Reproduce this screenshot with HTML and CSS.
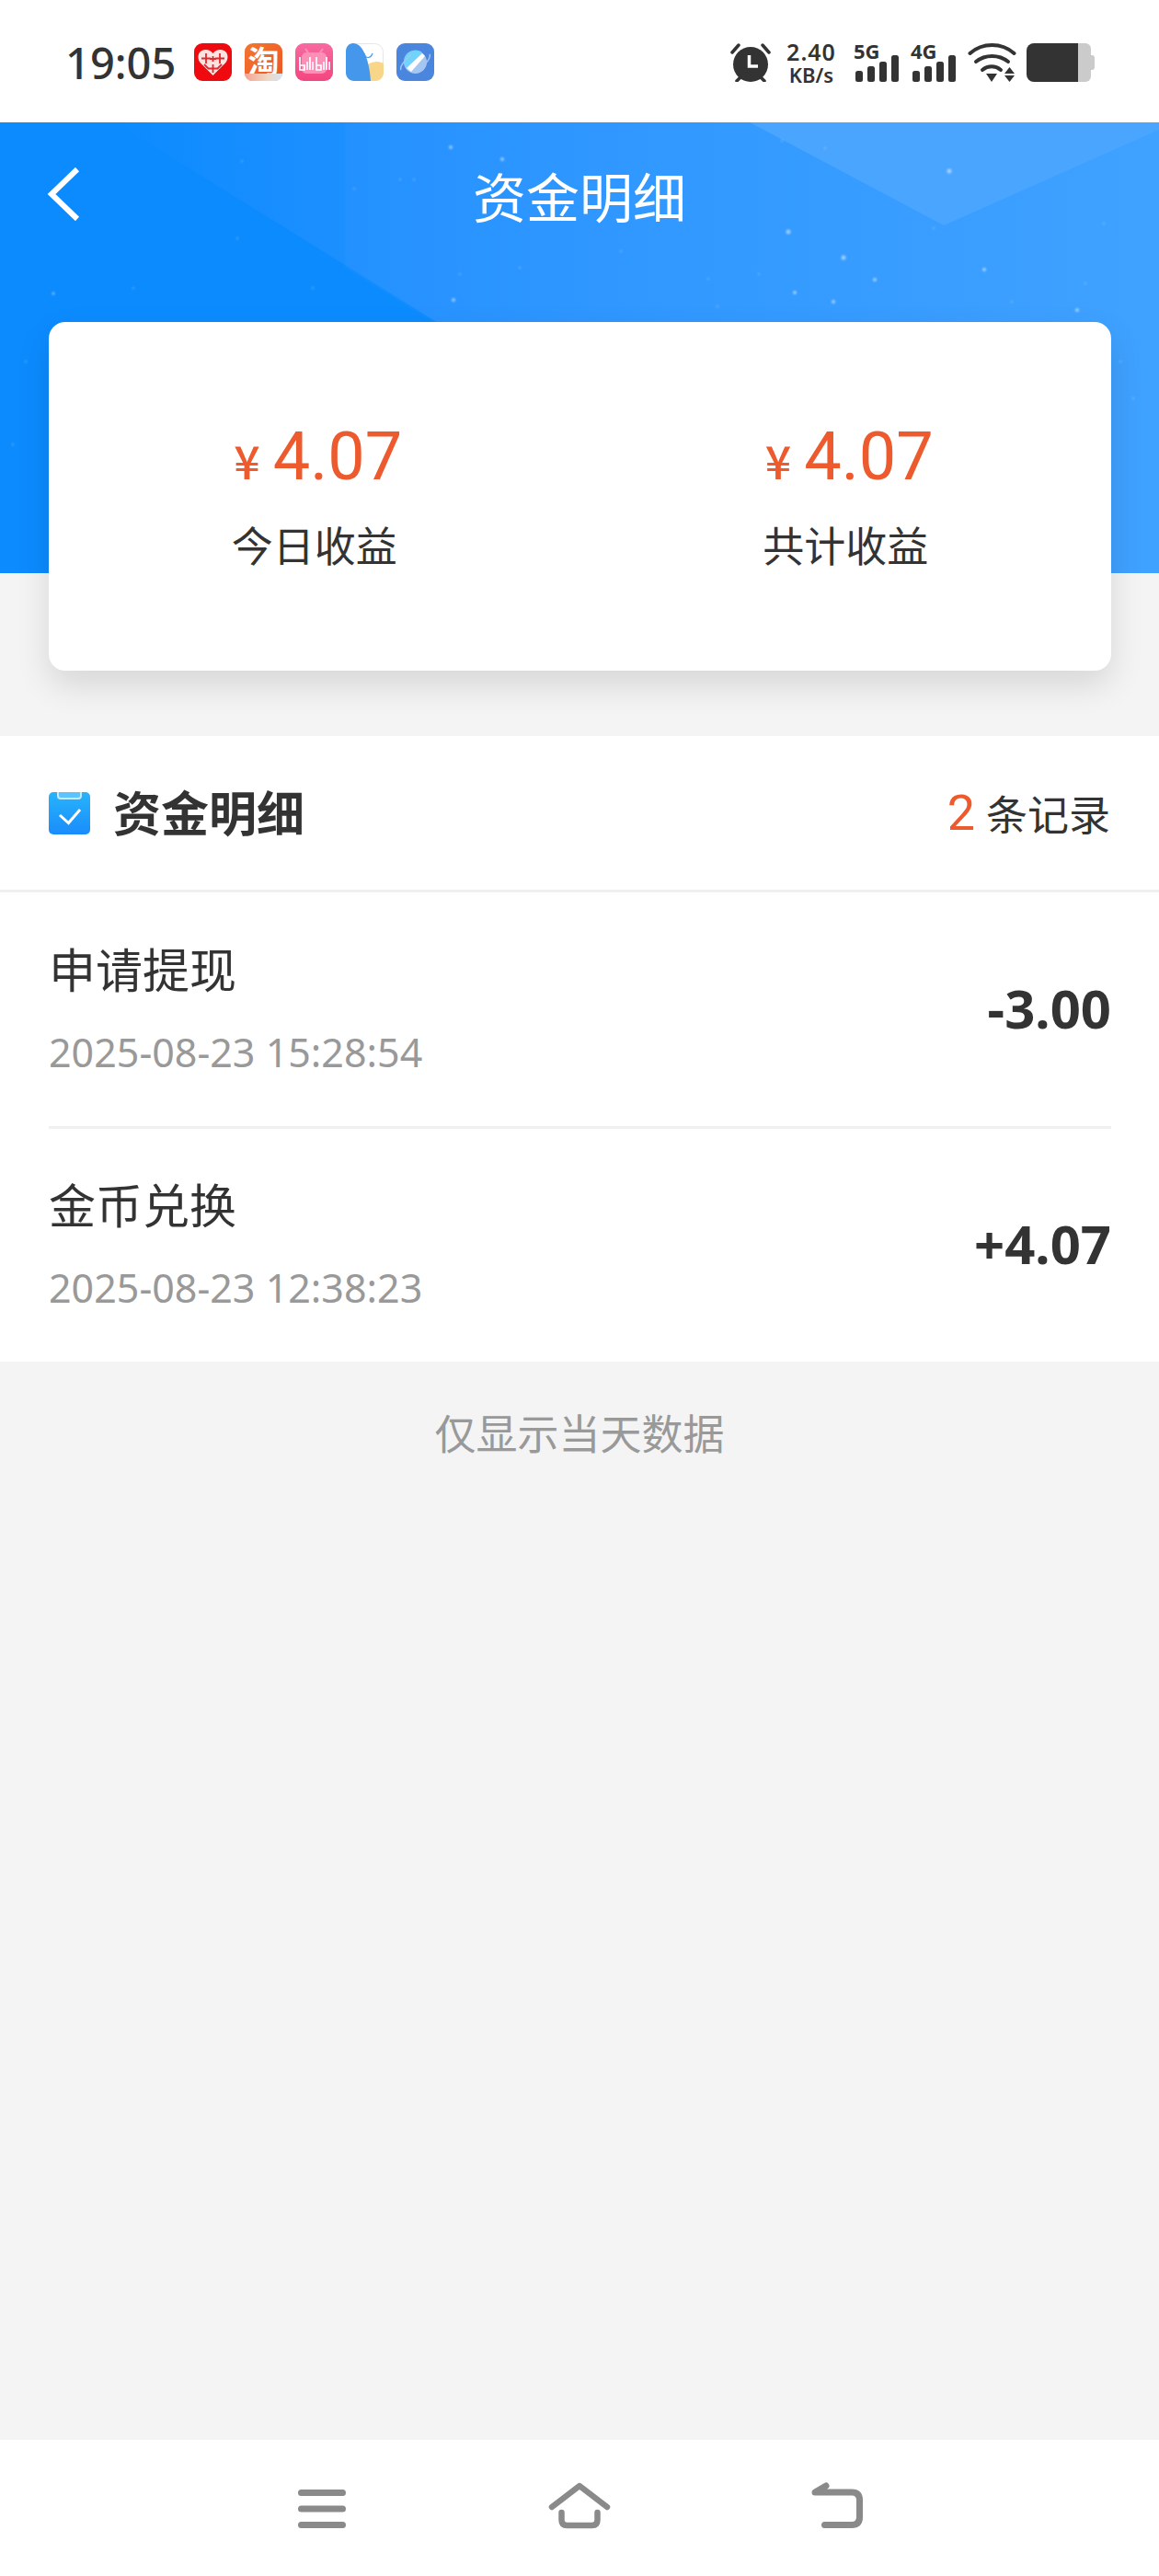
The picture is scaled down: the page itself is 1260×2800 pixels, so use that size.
FILE: index.html
```html
<!DOCTYPE html>
<html lang="zh-CN">
<head>
    <meta charset="UTF-8">
    <meta name="viewport" content="width=device-width, initial-scale=1.0">
    <title>资金明细</title>
    <link rel="stylesheet" href="styles.css">
</head>
<body>

<div class="page">
    <!-- 状态栏 -->
    <div class="status-bar">
        <span class="clock">19:05</span>
        <div class="app-icons">
            <svg class="app-icon" viewBox="0 0 41 41"><rect width="41" height="41" rx="9" fill="#ee0a0f"/><path d="M20.500 35 7 21.500C3 17 4 10 8.500 8c4-2 9-1 12 3 3-4 8-5 12-3 4.500 2 5.500 9 1.500 13.500z" fill="#fbe3e1"/><path d="M13 11v11M8 16.500h10M28 11v11M23 16.500h10M20.500 14v6M17 17h7M20.500 23v9M16 27.500h9M11 23l5 5M30 23l-5 5" stroke="#e2282d" stroke-width="1.800"/></svg>
            <div class="app-icon taobao">淘</div>
            <svg class="app-icon" viewBox="0 0 41 41"><defs><linearGradient id="bili-grad" x1="0" y1="0" x2="0" y2="1"><stop offset="0" stop-color="#f76aa0"/><stop offset="1" stop-color="#f4457f"/></linearGradient></defs><rect width="41" height="41" rx="9" fill="url(#bili-grad)"/><rect x="7" y="10" width="27" height="23" rx="5" fill="#fb8fb5"/><path d="M14 10l-3-4M27 10l3-4" stroke="#fb8fb5" stroke-width="2"/><path d="M5 15v14h5v-5H5M13 20v9M16 15v14M19 20v9M23 15v14h5v-5h-5M31 20v9M34 15v14M37 20v9" fill="none" stroke="#fff" stroke-width="1.700"/></svg>
            <svg class="app-icon" viewBox="0 0 41 41"><rect x=".5" y=".5" width="40" height="40" rx="9" fill="#fff" stroke="#e6e6e6"/><path d="M41 22v10c0 5-4 9-9 9H20V26c6-6 15-8 21-4z" fill="#f7d68a"/><path d="M0 9c0-5 3-9 8-9 9 0 17 14 19 41H9c-5 0-9-4-9-9z" fill="#4497ea"/><path d="M20 11c1 6 7 6 9 0" fill="none" stroke="#4497ea" stroke-width="1.200"/></svg>
            <svg class="app-icon" viewBox="0 0 41 41"><rect width="41" height="41" rx="9" fill="#4a85de"/><circle cx="20.500" cy="20.500" r="12.500" fill="#a6c6f2"/><path d="M9 15a12.500 12.500 0 0 1 19-5L12 28a12.500 12.500 0 0 1-3-13z" fill="#6fd3fb"/><path d="M11 27 28 11l3 3-15 17z" fill="#fff"/><path d="M5 29c-2-3 4-11 11-17M36 12c2 3-4 11-11 17" fill="none" stroke="#a6c6f2" stroke-width="1.500"/></svg>
        </div>
        <div class="status-right">
            <svg class="alarm" viewBox="0 0 44 42"><circle cx="22" cy="23" r="19" fill="#333"/><path d="M2 10 9 2M42 10 35 2M7 41l4-4M37 41l-4-4" stroke="#333" stroke-width="3.500" stroke-linecap="round"/><path d="M20.500 13v12H30" fill="none" stroke="#fff" stroke-width="3.500"/></svg>
            <div class="net-speed">
                <span class="speed-num">2.40</span>
                <span class="speed-unit">KB/s</span>
            </div>
            <div class="signal">
                <span class="signal-label">5G</span>
                <svg class="signal-bars" viewBox="0 0 50 42"><rect x="2" y="30" width="8" height="12" rx="2.500"/><rect x="15" y="25" width="8" height="17" rx="2.500"/><rect x="28" y="20" width="8" height="22" rx="2.500"/><rect x="41" y="13" width="8" height="29" rx="2.500"/></svg>
            </div>
            <div class="signal signal-second">
                <span class="signal-label">4G</span>
                <svg class="signal-bars" viewBox="0 0 50 42"><rect x="2" y="30" width="8" height="12" rx="2.500"/><rect x="15" y="25" width="8" height="17" rx="2.500"/><rect x="28" y="20" width="8" height="22" rx="2.500"/><rect x="41" y="13" width="8" height="29" rx="2.500"/></svg>
            </div>
            <svg class="wifi" viewBox="0 0 53 42"><g fill="none" stroke="#333" stroke-width="4" stroke-linecap="round"><path d="M2.500 11C16-1 37-1 50.500 11"/><path d="M9 20c10-8 25-8 35 0"/><path d="M16 29c6-5 14-5 20 0"/></g><path d="M20 33h12l-6 9z" fill="#333"/><path d="M45.500 26l5.500 7H40zM40 35h11l-5.500 7z" fill="#333"/></svg>
            <div class="battery">
                <div class="battery-level"></div>
                <div class="battery-rest"></div>
                <div class="battery-tip"></div>
            </div>
        </div>
    </div>

    <!-- 蓝色头部 -->
    <div class="header">
        <svg class="header-bg" viewBox="0 0 1260 490" preserveAspectRatio="none">
            <defs>
                <linearGradient id="fade-grad" x1="0" y1="0" x2="1" y2="0"><stop offset="0" stop-color="#0c8bff"/><stop offset=".3" stop-color="#2391ff"/><stop offset=".5" stop-color="#2c96ff"/><stop offset="1" stop-color="#3ca0ff"/></linearGradient>
                <filter id="soft"><feGaussianBlur stdDeviation=".8"/></filter>
            </defs>
            <polygon points="126,0 1260,0 1260,490 913,490" fill="url(#fade-grad)"/>
            <polygon points="375,0 1260,0 1260,490 913,490 375,158" fill="#fff" opacity=".025"/>
            <polygon points="815,0 1260,0 1260,8 1026,112" fill="#4aa5ff"/>
            <g fill="#fff" opacity=".5" filter="url(#soft)">
                <circle cx="1032" cy="53" r="2.500"/><circle cx="857" cy="119" r="2.500"/><circle cx="917" cy="147" r="2.500"/><circle cx="1070" cy="160" r="2"/><circle cx="906" cy="195" r="2"/><circle cx="1171" cy="204" r="2"/><circle cx="951" cy="171" r="2"/><circle cx="864" cy="185" r="2"/><circle cx="490" cy="27" r="2"/><circle cx="546" cy="40" r="2"/><circle cx="58" cy="186" r="1.500"/><circle cx="493" cy="193" r="2"/>
            </g>
            <g fill="#fff" opacity=".18" filter="url(#soft)">
                <circle cx="435" cy="62" r="1.500"/><circle cx="450" cy="62" r="1.500"/><circle cx="385" cy="72" r="1.500"/><circle cx="263" cy="42" r="1.500"/><circle cx="500" cy="165" r="1.500"/><circle cx="565" cy="158" r="1.500"/><circle cx="340" cy="180" r="1.500"/><circle cx="145" cy="180" r="1.500"/><circle cx="258" cy="126" r="1.500"/><circle cx="740" cy="70" r="1.500"/><circle cx="850" cy="20" r="1.500"/><circle cx="897" cy="28" r="1.500"/><circle cx="1015" cy="115" r="1.500"/><circle cx="1180" cy="175" r="1.500"/><circle cx="1100" cy="195" r="1.500"/><circle cx="1200" cy="110" r="1.500"/><circle cx="780" cy="200" r="1.500"/><circle cx="675" cy="140" r="1.500"/><circle cx="770" cy="170" r="1.500"/><circle cx="825" cy="165" r="1.500"/><circle cx="1232" cy="300" r="1.500"/><circle cx="1218" cy="260" r="1.500"/><circle cx="28" cy="260" r="1.500"/><circle cx="14" cy="350" r="1.500"/>
            </g>
        </svg>
        <div class="header-bar">
            <svg class="back" viewBox="0 0 36 58"><path d="M33 2 5 29l28 27" fill="none" stroke="#fff" stroke-width="6"/></svg>
            <h1 class="header-title">资金明细</h1>
        </div>
    </div>

    <!-- 收益卡片 -->
    <div class="summary-card">
        <div class="summary-item">
            <div class="amount"><span class="yen">¥</span>4.07</div>
            <div class="amount-label">今日收益</div>
        </div>
        <div class="summary-item">
            <div class="amount"><span class="yen">¥</span>4.07</div>
            <div class="amount-label">共计收益</div>
        </div>
    </div>

    <!-- 明细列表 -->
    <div class="detail">
        <div class="detail-head">
            <div class="detail-title">
                <svg class="detail-icon" viewBox="0 0 45 46">
                    <defs><linearGradient id="clip-grad" x1="0" y1="0" x2="0" y2="1"><stop offset="0" stop-color="#27b4fb"/><stop offset="1" stop-color="#1a8cfb"/></linearGradient></defs>
                    <rect width="45" height="46" rx="5" fill="url(#clip-grad)"/>
                    <path d="M10 0v4c0 2 1 3 3 3h19c2 0 3-1 3-3V0" fill="#5cc4fc" stroke="#c6ebfe" stroke-width="2"/>
                    <path d="M12 25l9.500 8.500L34 19" fill="none" stroke="#fff" stroke-width="3"/>
                </svg>
                <span class="detail-name">资金明细</span>
            </div>
            <div class="detail-count"><span class="count-num">2</span>条记录</div>
        </div>
        <div class="record">
            <div class="record-info">
                <div class="record-name">申请提现</div>
                <div class="record-time">2025-08-23 15:28:54</div>
            </div>
            <div class="record-money">-3.00</div>
        </div>
        <div class="record">
            <div class="record-info">
                <div class="record-name">金币兑换</div>
                <div class="record-time">2025-08-23 12:38:23</div>
            </div>
            <div class="record-money">+4.07</div>
        </div>
    </div>

    <div class="tip">仅显示当天数据</div>

    <!-- 底部导航 -->
    <div class="nav-bar">
        <svg class="nav-icon" viewBox="0 0 70 60"><path d="M12.500 13.500h45M12.500 31h45M12.500 48.500h45" fill="none" stroke="#8a8a8a" stroke-width="7" stroke-linecap="round"/></svg>
        <svg class="nav-icon" viewBox="0 0 70 60"><path d="M5 29 35 6l30 23M15.500 35v8q0 6 6 6h27q6 0 6-6v-8" fill="none" stroke="#8a8a8a" stroke-width="6.500" stroke-linecap="round" stroke-linejoin="round"/></svg>
        <svg class="nav-icon" viewBox="0 0 70 60"><path d="M21.500 48.500H51q8.500 0 8.500-8.500V21.500q0-8.500-8.500-8.500H11L23 6" fill="none" stroke="#8a8a8a" stroke-width="7" stroke-linecap="round" stroke-linejoin="round"/></svg>
    </div>
</div>

</body>
</html>
```

FILE: styles.css
```css
* {
    box-sizing: border-box;
}
body {
    margin: 0;
    padding: 0;
    font-family: "Noto Sans CJK SC", "Noto Sans", sans-serif;
    color: #333;
    background-color: #f4f4f4;
}
.page {
    display: flex;
    flex-direction: column;
    width: 1260px;
    height: 2800px;
    overflow: hidden;
}

/* 状态栏 */
.status-bar {
    display: flex;
    align-items: flex-start;
    height: 133px;
    padding: 47px 70px 0 71px;
    background-color: #fff;
}
.clock {
    width: 140px;
    font-family: "Noto Sans", sans-serif;
    font-size: 47px;
    font-weight: 500;
    line-height: 42px;
    color: #333;
}
.app-icons {
    display: flex;
    gap: 14px;
}
.app-icon {
    display: block;
    width: 41px;
    height: 41px;
}
.taobao {
    position: relative;
    border-radius: 9px;
    background: linear-gradient(135deg, #f4762c, #ea5527);
    color: #fff;
    font-size: 34px;
    font-weight: 700;
    line-height: 38px;
    text-align: center;
}
.taobao::after {
    content: "";
    position: absolute;
    left: 0;
    right: 0;
    bottom: 0;
    height: 8px;
    border-radius: 0 0 9px 9px;
    background: linear-gradient(90deg, #f7a38f, #eed7c4 60%, #d6e4f5);
}
.status-right {
    display: flex;
    align-items: flex-start;
    margin-left: auto;
}
.alarm {
    width: 44px;
    height: 42px;
}
.net-speed {
    display: flex;
    flex-direction: column;
    align-items: center;
    width: 54px;
    margin: -3px 0 0 17px;
    font-family: "Noto Sans", sans-serif;
    font-weight: 600;
    color: #333;
}
.speed-num {
    font-size: 25px;
    line-height: 25px;
    letter-spacing: 1px;
}
.speed-unit {
    font-size: 22px;
    line-height: 25px;
}
.signal {
    position: relative;
    width: 50px;
    height: 42px;
    margin-left: 19px;
}
.signal-second {
    margin-left: 12px;
}
.signal-label {
    position: absolute;
    left: 0;
    top: -4px;
    font-family: "Noto Sans", sans-serif;
    font-size: 22px;
    font-weight: 700;
    line-height: 24px;
}
.signal-bars {
    display: block;
    width: 50px;
    height: 42px;
    fill: #333;
}
.wifi {
    width: 53px;
    height: 42px;
    margin-left: 12px;
}
.battery {
    display: flex;
    align-items: center;
    width: 74px;
    height: 42px;
    margin-left: 11px;
}
.battery-level {
    width: 56px;
    height: 42px;
    border-radius: 8px 0 0 8px;
    background-color: #333;
}
.battery-rest {
    width: 14px;
    height: 42px;
    border-radius: 0 6px 6px 0;
    background-color: #cbcbcb;
}
.battery-tip {
    width: 4px;
    height: 16px;
    border-radius: 0 3px 3px 0;
    background-color: #cbcbcb;
}

/* 头部 */
.header {
    position: relative;
    flex: none;
    height: 490px;
    background-color: #0c8bff;
}
.header-bg {
    position: absolute;
    left: 0;
    top: 0;
    width: 100%;
    height: 100%;
}
.header-bar {
    position: relative;
    display: flex;
    align-items: center;
    justify-content: center;
    height: 122px;
    margin-top: 18px;
}
.back {
    position: absolute;
    left: 51px;
    top: 31px;
    width: 36px;
    height: 58px;
}
.header-title {
    margin: 0;
    font-size: 58px;
    font-weight: 400;
    line-height: 92px;
    color: #fff;
}

/* 卡片 */
.summary-card {
    position: relative;
    display: flex;
    flex: none;
    height: 379px;
    margin: -273px 52px 0 53px;
    padding-top: 105px;
    border-radius: 18px;
    background-color: #fff;
    box-shadow: 0 16px 36px rgba(0, 0, 0, 0.12);
}
.summary-item {
    flex: 1;
    text-align: center;
}
.amount {
    padding-left: 8px;
    font-family: Roboto, sans-serif;
    font-size: 72px;
    line-height: 84px;
    color: #ec5a2e;
}
.yen {
    margin-right: 14px;
    font-family: "Noto Sans CJK SC", sans-serif;
    font-size: 50px;
    font-weight: 500;
}
.amount-label {
    margin-top: 21px;
    font-size: 45px;
    line-height: 60px;
}

/* 明细 */
.detail {
    flex: none;
    margin-top: 71px;
    background-color: #fff;
}
.detail-head {
    display: flex;
    align-items: center;
    justify-content: space-between;
    height: 170px;
    padding: 0 53px;
    border-bottom: 3px solid #f0f0f0;
}
.detail-title {
    display: flex;
    align-items: center;
    gap: 25px;
    font-size: 52px;
    font-weight: 700;
}
.detail-name {
    padding-bottom: 5px;
}
.detail-icon {
    width: 45px;
    height: 46px;
}
.detail-count {
    display: flex;
    align-items: center;
    font-size: 45px;
}
.count-num {
    margin-right: 12px;
    font-family: Roboto, sans-serif;
    font-size: 54px;
    color: #ec5a2e;
}
.record {
    display: flex;
    align-items: center;
    justify-content: space-between;
    height: 257px;
    margin: 0 52px 0 53px;
    border-bottom: 3px solid #f0f0f0;
}
.record:last-child {
    height: 253px;
    border-bottom: none;
}
.record-info {
    padding-bottom: 6px;
}
.record-name {
    font-size: 51px;
    line-height: 70px;
}
.record-time {
    margin-top: 29px;
    font-family: "Noto Sans", sans-serif;
    font-size: 43px;
    line-height: 56px;
    color: #999;
}
.record-money {
    padding-bottom: 4px;
    font-family: "Noto Sans", sans-serif;
    font-size: 58px;
    font-weight: 700;
}

/* 底部提示 */
.tip {
    margin-top: 46px;
    font-size: 45px;
    line-height: 62px;
    text-align: center;
    color: #999;
}
.nav-bar {
    display: flex;
    align-items: center;
    justify-content: center;
    gap: 210px;
    height: 148px;
    margin-top: auto;
    background-color: #fff;
}
.nav-icon {
    width: 70px;
    height: 60px;
}
```
